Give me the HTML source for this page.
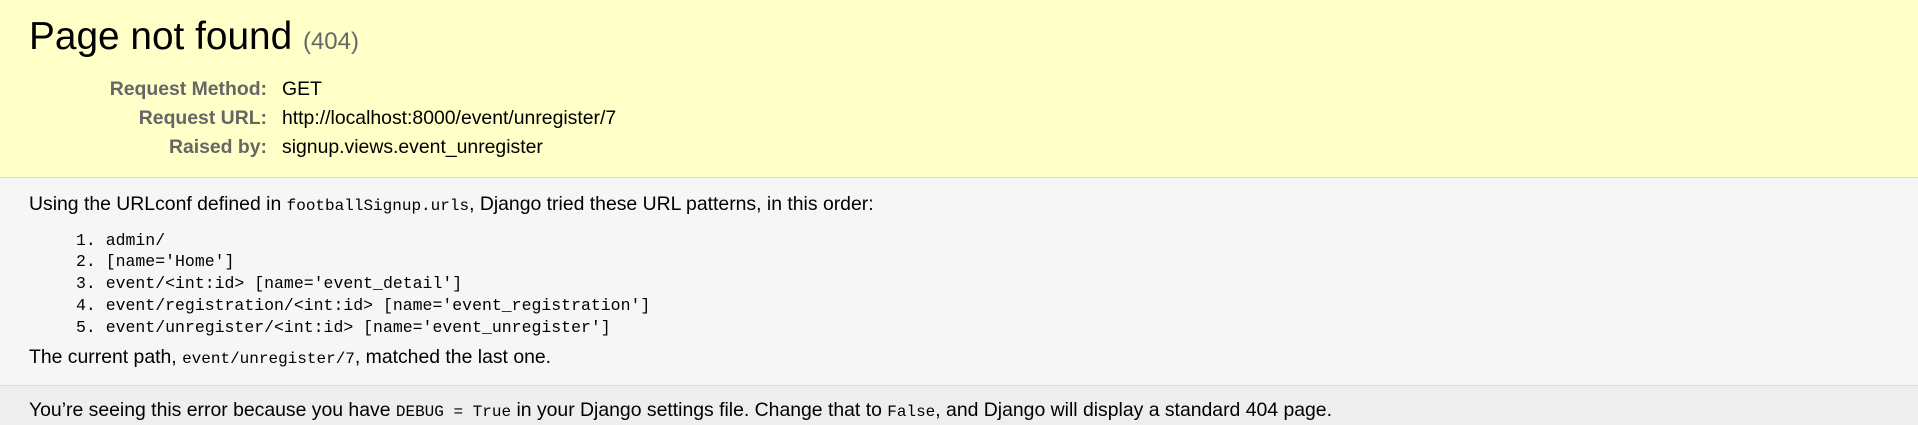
<!DOCTYPE html>
<html><head><meta charset="utf-8"><style>
html,body{margin:0;padding:0;width:1918px;height:424px;overflow:hidden;background:#f6f6f6;}
body{font-family:"Liberation Sans",Arial,sans-serif;color:#000;font-size:19.4px;}
.t{position:absolute;white-space:nowrap;line-height:1.117;}
code,.m{font-family:"Liberation Mono","DejaVu Sans Mono",monospace;font-size:16px;}
#hdr{position:absolute;left:0;top:0;width:1918px;height:177px;background:#ffffc8;border-bottom:1px solid #ddd;}
#ftr{position:absolute;left:0;top:385px;width:1918px;height:39px;background:#eeeeee;border-top:1px solid #ddd;}
.lab{position:absolute;right:calc(1918px - 267px);font-weight:bold;color:#666;white-space:nowrap;line-height:1.117;}
.val{position:absolute;left:282px;white-space:nowrap;line-height:1.117;}
.li{position:absolute;left:76px;white-space:pre;font-family:"Liberation Mono","DejaVu Sans Mono",monospace;font-size:16.5px;line-height:1.1;color:#000;}
</style></head><body>
<div id="hdr"></div>
<div id="ftr"></div>
<div class="t" style="left:29px;top:15px;font-size:38.8px;">Page not found <span style="font-size:24px;color:#666;">(404)</span></div>
<div class="lab" style="top:79.4px;">Request Method:</div><div class="val" style="top:79.4px;">GET</div>
<div class="lab" style="top:108.4px;">Request URL:</div><div class="val" style="top:108.4px;">http://localhost:8000/event/unregister/7</div>
<div class="lab" style="top:137.4px;">Raised by:</div><div class="val" style="top:137.4px;">signup.views.event_unregister</div>
<div class="t" style="left:29px;top:194.4px;">Using the URLconf defined in <code>footballSignup.urls</code>, Django tried these URL patterns, in this order:</div>
<div class="li" style="top:231.7px;">1. admin/</div>
<div class="li" style="top:253.4px;">2. [name='Home']</div>
<div class="li" style="top:275.1px;">3. event/&lt;int:id&gt; [name='event_detail']</div>
<div class="li" style="top:296.8px;">4. event/registration/&lt;int:id&gt; [name='event_registration']</div>
<div class="li" style="top:318.5px;">5. event/unregister/&lt;int:id&gt; [name='event_unregister']</div>
<div class="t" style="left:29px;top:347.4px;">The current path, <code>event/unregister/7</code>, matched the last one.</div>
<div class="t" style="left:29px;top:400.4px;">You’re seeing this error because you have <code>DEBUG = True</code> in your Django settings file. Change that to <code>False</code>, and Django will display a standard 404 page.</div>
</body></html>
